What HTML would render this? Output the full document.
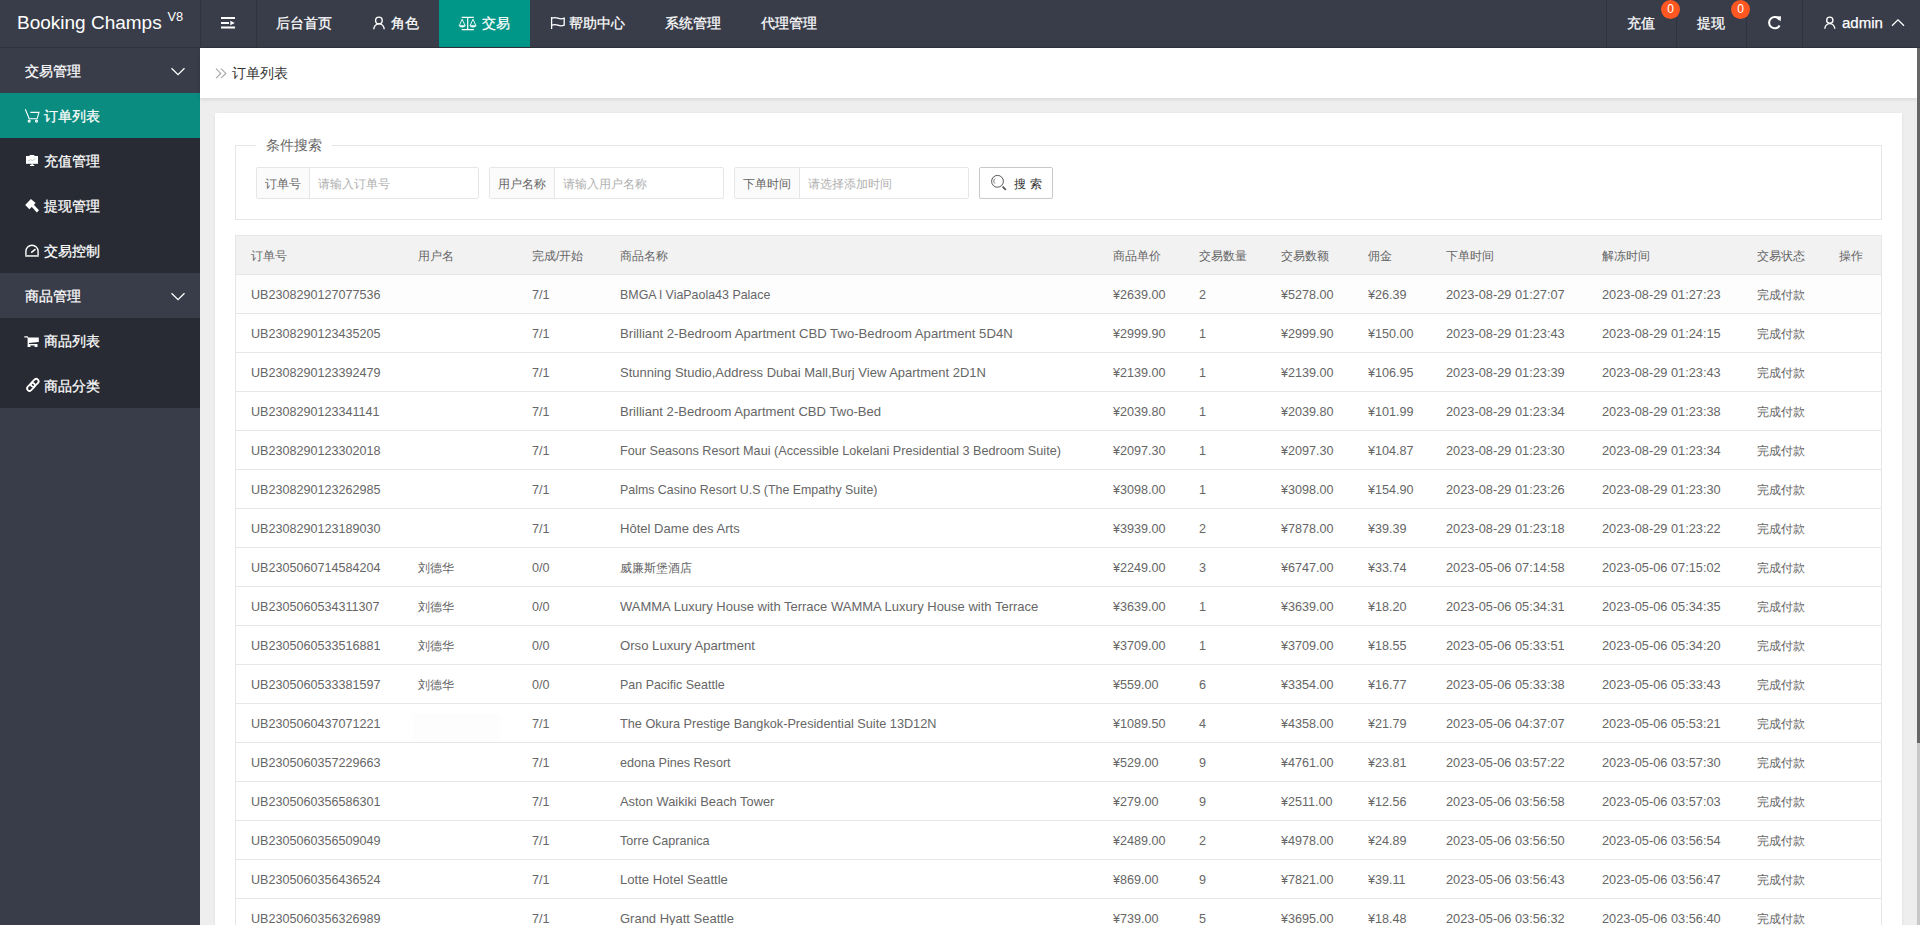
<!DOCTYPE html>
<html><head><meta charset="utf-8">
<style>
*{margin:0;padding:0;box-sizing:border-box}
html,body{width:1920px;height:925px;overflow:hidden;background:#eeeeee;font-family:"Liberation Sans",sans-serif;font-size:14px;color:#666;position:relative}
div,span{position:absolute;white-space:nowrap}
#header{left:0;top:0;width:1920px;height:48px;background:#393D49}
.vl{top:0;width:1px;height:47px;background:#30333c}
.hb{left:0;top:47px;width:1920px;height:1px;background:#30333c}
.ht{top:0;line-height:46px;color:#fff;font-size:14px;-webkit-text-stroke:0.25px #fff}
#logo{left:17px;top:0;line-height:46px;color:#fff;font-size:19px}
#v8{left:167.5px;top:11px;line-height:12px;color:#fff;font-size:12.8px}
.htact{left:439px;top:0;width:91px;height:47px;background:#009688}
.badge{width:19px;height:19px;border-radius:50%;background:#FF5722;color:#fff;font-size:12px;line-height:19px;text-align:center;top:0}
#side{left:0;top:48px;width:200px;height:877px;background:#393D49}
.mi{left:0;width:200px;height:45px}
.mi .tx{left:44px;top:0;line-height:47px;color:#fff;font-size:14px;-webkit-text-stroke:0.25px #fff}
.mi.p .tx{left:25px}
.sub{background:#282B33}
.act{background:#0a8d80}
#crumb{left:200px;top:48px;width:1717px;height:50px;background:#fff;box-shadow:0 1px 4px rgba(0,0,0,.12)}
#card{left:215px;top:113px;width:1687px;height:830px;background:#fff;box-shadow:0 1px 3px 0 rgba(0,0,0,.07)}
#fs{left:235px;top:145px;width:1647px;height:75px;border:1px solid #e6e6e6}
.leg{left:20px;top:-10px;background:#fff;padding:0 10px;font-size:14px;color:#666;line-height:18px}
.ig{top:167px;height:32px;border:1px solid #e6e6e6;border-radius:2px;background:#fff}
.ig .lb{left:0;top:0;height:30px;line-height:32px;background:#fbfbfb;border-right:1px solid #e6e6e6;font-size:12px;color:#666;text-align:center}
.ig .ph{top:0;line-height:32px;font-size:12px;color:#b0b0b0}
#btn{left:979px;top:167px;width:74px;height:32px;border:1px solid #c9c9c9;border-radius:2px;background:#fff}
.tbl{border:1px solid #e6e6e6;background:#fff}
.thd{background:#f2f2f2}
.hl{height:1px;background:#e6e6e6}
.cell{line-height:38px;height:38px;font-size:12.6px;color:#666;padding-top:1px}
.cj{font-size:12px}
.th{color:#666}
#scroll{left:1917px;top:48px;width:3px;height:877px;background:#c8c8c8}
#thumb{left:1917px;top:48px;width:3px;height:695px;background:#666}
svg{position:absolute;overflow:visible;left:0;top:0;z-index:5}

</style></head><body>
<div id="header">
  <div id="logo">Booking Champs</div><div id="v8">V8</div>
  <div class="hb"></div>
  <div class="vl" style="left:200px"></div>
  <div class="vl" style="left:256px"></div>
  <svg style="left:0;top:0" width="1" height="1"><g fill="#fff"><rect x="221" y="17" width="14" height="2"/><rect x="221" y="22" width="8" height="2"/><path d="M230.3 20.8 L234.8 23 L230.3 25.2 Z"/><rect x="221" y="26.5" width="14" height="2"/></g></svg>
  <div class="htact"></div>
  <div class="ht" style="left:276px">后台首页</div>
  <svg style="left:0;top:0" width="1" height="1"><g fill="none" stroke="#fff" stroke-width="1.4"><circle cx="378.9" cy="20.4" r="3.3"/><path d="M373.8 29.2 A5.2 5.4 0 0 1 384.2 29.2"/></g></svg>
  <div class="ht" style="left:391px">角色</div>
  <svg style="left:0;top:0" width="1" height="1"><g fill="#fff" stroke="#fff"><path d="M461.7 17.4 H473.8 M467.7 16.8 V29.5 M461.7 29.6 H473.8" stroke-width="1.2" fill="none"/><path d="M462.2 19.2 L459.3 25.6 M462.2 19.2 L465.1 25.6 M473 19.2 L470.1 25.6 M473 19.2 L475.9 25.6" stroke-width="0.9" fill="none"/><path d="M459 25.4 H465.4 Q465 27.2 462.2 27.2 Q459.4 27.2 459 25.4Z M469.8 25.4 H476.2 Q475.8 27.2 473 27.2 Q470.2 27.2 469.8 25.4Z" stroke-width="0.5"/></g></svg>
  <div class="ht" style="left:482px">交易</div>
  <svg style="left:0;top:0" width="1" height="1"><g fill="none" stroke="#fff" stroke-width="1.3"><path d="M551.6 17 V29"/><path d="M551.8 18.2 Q555 17 558 18.2 Q561 19.4 564.2 18.2 V25.2 Q561 26.4 558 25.2 Q555 24 551.8 25.2"/></g></svg>
  <div class="ht" style="left:569px">帮助中心</div>
  <div class="ht" style="left:665px">系统管理</div>
  <div class="ht" style="left:761px">代理管理</div>
  <div class="vl" style="left:1606px"></div>
  <div class="vl" style="left:1676px"></div>
  <div class="vl" style="left:1746px"></div>
  <div class="vl" style="left:1802px"></div>
  <div class="ht" style="left:1627px">充值</div>
  <div class="ht" style="left:1697px">提现</div>
  <div class="badge" style="left:1661px">0</div>
  <div class="badge" style="left:1731px">0</div>
  <svg style="left:0;top:0" width="1" height="1"><g fill="none" stroke="#fff" stroke-width="2"><path d="M1779.4 19.6 A5.6 5.6 0 1 0 1779.6 25.4"/></g><path d="M1775.8 16.6 L1781 16.2 L1780.6 21.6 Z" fill="#fff"/></svg>
  <svg style="left:0;top:0" width="1" height="1"><g fill="none" stroke="#fff" stroke-width="1.4"><circle cx="1829.8" cy="20.2" r="3.1"/><path d="M1824.8 28.8 A5 5.2 0 0 1 1834.8 28.8"/></g></svg>
  <div class="ht" style="left:1842px;font-size:15px">admin</div>
  <svg style="left:0;top:0" width="1" height="1"><path d="M1892 25.8 L1898 19.8 L1904 25.8" fill="none" stroke="#fff" stroke-width="1.3"/></svg>
</div>
<div id="side">
  <div class="mi p" style="top:0"><span class="tx">交易管理</span></div>
  <div class="mi act" style="top:45px"><span class="tx">订单列表</span></div>
  <div class="mi sub" style="top:90px"><span class="tx">充值管理</span></div>
  <div class="mi sub" style="top:135px"><span class="tx">提现管理</span></div>
  <div class="mi sub" style="top:180px"><span class="tx">交易控制</span></div>
  <div class="mi p" style="top:225px"><span class="tx">商品管理</span></div>
  <div class="mi sub" style="top:270px"><span class="tx">商品列表</span></div>
  <div class="mi sub" style="top:315px"><span class="tx">商品分类</span></div>
</div>
<svg style="left:0;top:0" width="1" height="1">
  <g fill="none" stroke="#fff" stroke-width="1.3"><path d="M171.5 68.3 L178 74.6 L184.5 68.3"/><path d="M171.5 293.3 L178 299.6 L184.5 293.3"/></g>
  <!-- cart outline -->
  <g fill="none" stroke="#fff" stroke-width="1.1"><path d="M25.3 109.3 L29.2 118.8 H37.1 L39 112.4 H30.4"/><circle cx="29.2" cy="121.1" r="1"/><circle cx="36.5" cy="121.1" r="1"/></g>
  <!-- monitor -->
  <g fill="#fff"><rect x="26" y="156" width="12" height="7.8"/><rect x="29.6" y="155" width="4.8" height="1.5"/><rect x="31.4" y="163.5" width="1.4" height="1.6"/><rect x="30" y="164.8" width="4.2" height="1.2"/></g>
  <path d="M28 161 L30.5 159.8 L32.5 160.5 L35.5 158.5" stroke="#9aa" stroke-width="0.6" fill="none"/>
  <!-- hammer -->
  <g fill="#fff"><path d="M25.2 204.9 L30.9 198.9 L35.6 203.1 L29.4 209.3 Z"/><path d="M31.2 206.2 L33.4 204.2 L39 210.2 L36.8 212.4 Z"/></g>
  <!-- gauge -->
  <g fill="none" stroke="#fff" stroke-width="1.4"><path d="M25.9 255.4 V251.4 A6.1 6.1 0 0 1 38.1 251.4 V255.4"/><path d="M31.2 252.6 L35.5 249.2" stroke-width="1.5"/></g>
  <rect x="25.2" y="255" width="13.6" height="1.9" fill="#ccc"/>
  <!-- cart filled -->
  <g fill="#fff"><path d="M24.3 336.3 H27.6 L28.3 337.4 H38.8 V342.1 L28.9 343.1 V344 H37.5 V347 H34.6 V345.6 H30.4 V347 H27.6 V338 L26.9 337.5 H24.3 Z"/></g>
  <!-- link -->
  <g fill="none" stroke="#fff" stroke-width="1.8"><rect x="26.5" y="384.5" width="9" height="4.8" rx="2.4" transform="rotate(-45 31 386.9)"/><rect x="30.2" y="380.4" width="9" height="4.8" rx="2.4" transform="rotate(-45 34.7 382.8)"/></g>
  <!-- crumb arrows -->
  <g fill="none" stroke="#aaa" stroke-width="1.2"><path d="M216 68.6 L220.8 73.4 L216 78.2"/><path d="M221 68.6 L225.8 73.4 L221 78.2"/></g>
  <!-- search icon -->
  <g fill="none" stroke="#555" stroke-width="1"><circle cx="997.5" cy="181.3" r="5.9"/><path d="M1002.6 186.6 L1005.8 189.8" stroke-width="1.8"/><path d="M995 178.6 A3.2 3.2 0 0 0 995 183.6" stroke-width="0.8"/></g>
</svg>
<div id="crumb"><span style="left:32px;top:0;line-height:50px;font-size:14px;color:#333">订单列表</span></div>
<div id="card"></div>
<div id="fs"><span class="leg">条件搜索</span></div>
<div class="ig" style="left:256px;width:223px"><span class="lb" style="width:53px">订单号</span><span class="ph" style="left:61px">请输入订单号</span></div>
<div class="ig" style="left:489px;width:235px"><span class="lb" style="width:65px">用户名称</span><span class="ph" style="left:73px">请输入用户名称</span></div>
<div class="ig" style="left:734px;width:235px"><span class="lb" style="width:65px">下单时间</span><span class="ph" style="left:73px">请选择添加时间</span></div>
<div id="btn"><span style="left:34px;top:0;line-height:32px;font-size:12px;color:#333;letter-spacing:4px">搜索</span></div>
<div id="scroll"></div><div id="thumb"></div>

<div class="tbl" style="left:235px;top:235px;width:1647px;height:703px"></div>
<div style="left:236px;top:275px;width:1645px;height:38px;background:#fdfdfd"></div><div style="left:413px;top:714px;width:87px;height:27px;background:#fdfdfd"></div>
<div class="thd" style="left:236px;top:236px;width:1645px;height:38px"></div>
<div class="cell th cj" style="left:251px;top:236px">订单号</div>
<div class="cell th cj" style="left:418px;top:236px">用户名</div>
<div class="cell th cj" style="left:532px;top:236px">完成/开始</div>
<div class="cell th cj" style="left:620px;top:236px">商品名称</div>
<div class="cell th cj" style="left:1113px;top:236px">商品单价</div>
<div class="cell th cj" style="left:1199px;top:236px">交易数量</div>
<div class="cell th cj" style="left:1281px;top:236px">交易数额</div>
<div class="cell th cj" style="left:1368px;top:236px">佣金</div>
<div class="cell th cj" style="left:1446px;top:236px">下单时间</div>
<div class="cell th cj" style="left:1602px;top:236px">解冻时间</div>
<div class="cell th cj" style="left:1757px;top:236px">交易状态</div>
<div class="cell th cj" style="left:1839px;top:236px">操作</div>
<div class="hl" style="left:236px;top:274px;width:1645px"></div>
<div class="cell" style="left:251px;top:275px">UB2308290127077536</div>
<div class="cell" style="left:532px;top:275px">7/1</div>
<div class="cell" style="left:620px;top:275px;transform:scaleX(0.9868);transform-origin:0 0">BMGA l ViaPaola43 Palace</div>
<div class="cell" style="left:1113px;top:275px">¥2639.00</div>
<div class="cell" style="left:1199px;top:275px">2</div>
<div class="cell" style="left:1281px;top:275px">¥5278.00</div>
<div class="cell" style="left:1368px;top:275px">¥26.39</div>
<div class="cell" style="left:1446px;top:275px;transform:scaleX(1.015);transform-origin:0 0">2023-08-29 01:27:07</div>
<div class="cell" style="left:1602px;top:275px;transform:scaleX(1.015);transform-origin:0 0">2023-08-29 01:27:23</div>
<div class="cell cj" style="left:1757px;top:275px">完成付款</div>
<div class="hl" style="left:236px;top:313px;width:1645px"></div>
<div class="cell" style="left:251px;top:314px">UB2308290123435205</div>
<div class="cell" style="left:532px;top:314px">7/1</div>
<div class="cell" style="left:620px;top:314px;transform:scaleX(1.0435);transform-origin:0 0">Brilliant 2-Bedroom Apartment CBD Two-Bedroom Apartment 5D4N</div>
<div class="cell" style="left:1113px;top:314px">¥2999.90</div>
<div class="cell" style="left:1199px;top:314px">1</div>
<div class="cell" style="left:1281px;top:314px">¥2999.90</div>
<div class="cell" style="left:1368px;top:314px">¥150.00</div>
<div class="cell" style="left:1446px;top:314px;transform:scaleX(1.015);transform-origin:0 0">2023-08-29 01:23:43</div>
<div class="cell" style="left:1602px;top:314px;transform:scaleX(1.015);transform-origin:0 0">2023-08-29 01:24:15</div>
<div class="cell cj" style="left:1757px;top:314px">完成付款</div>
<div class="hl" style="left:236px;top:352px;width:1645px"></div>
<div class="cell" style="left:251px;top:353px">UB2308290123392479</div>
<div class="cell" style="left:532px;top:353px">7/1</div>
<div class="cell" style="left:620px;top:353px;transform:scaleX(1.0317);transform-origin:0 0">Stunning Studio,Address Dubai Mall,Burj View Apartment 2D1N</div>
<div class="cell" style="left:1113px;top:353px">¥2139.00</div>
<div class="cell" style="left:1199px;top:353px">1</div>
<div class="cell" style="left:1281px;top:353px">¥2139.00</div>
<div class="cell" style="left:1368px;top:353px">¥106.95</div>
<div class="cell" style="left:1446px;top:353px;transform:scaleX(1.015);transform-origin:0 0">2023-08-29 01:23:39</div>
<div class="cell" style="left:1602px;top:353px;transform:scaleX(1.015);transform-origin:0 0">2023-08-29 01:23:43</div>
<div class="cell cj" style="left:1757px;top:353px">完成付款</div>
<div class="hl" style="left:236px;top:391px;width:1645px"></div>
<div class="cell" style="left:251px;top:392px">UB2308290123341141</div>
<div class="cell" style="left:532px;top:392px">7/1</div>
<div class="cell" style="left:620px;top:392px;transform:scaleX(1.0402);transform-origin:0 0">Brilliant 2-Bedroom Apartment CBD Two-Bed</div>
<div class="cell" style="left:1113px;top:392px">¥2039.80</div>
<div class="cell" style="left:1199px;top:392px">1</div>
<div class="cell" style="left:1281px;top:392px">¥2039.80</div>
<div class="cell" style="left:1368px;top:392px">¥101.99</div>
<div class="cell" style="left:1446px;top:392px;transform:scaleX(1.015);transform-origin:0 0">2023-08-29 01:23:34</div>
<div class="cell" style="left:1602px;top:392px;transform:scaleX(1.015);transform-origin:0 0">2023-08-29 01:23:38</div>
<div class="cell cj" style="left:1757px;top:392px">完成付款</div>
<div class="hl" style="left:236px;top:430px;width:1645px"></div>
<div class="cell" style="left:251px;top:431px">UB2308290123302018</div>
<div class="cell" style="left:532px;top:431px">7/1</div>
<div class="cell" style="left:620px;top:431px;transform:scaleX(1.0046);transform-origin:0 0">Four Seasons Resort Maui (Accessible Lokelani Presidential 3 Bedroom Suite)</div>
<div class="cell" style="left:1113px;top:431px">¥2097.30</div>
<div class="cell" style="left:1199px;top:431px">1</div>
<div class="cell" style="left:1281px;top:431px">¥2097.30</div>
<div class="cell" style="left:1368px;top:431px">¥104.87</div>
<div class="cell" style="left:1446px;top:431px;transform:scaleX(1.015);transform-origin:0 0">2023-08-29 01:23:30</div>
<div class="cell" style="left:1602px;top:431px;transform:scaleX(1.015);transform-origin:0 0">2023-08-29 01:23:34</div>
<div class="cell cj" style="left:1757px;top:431px">完成付款</div>
<div class="hl" style="left:236px;top:469px;width:1645px"></div>
<div class="cell" style="left:251px;top:470px">UB2308290123262985</div>
<div class="cell" style="left:532px;top:470px">7/1</div>
<div class="cell" style="left:620px;top:470px;transform:scaleX(0.9835);transform-origin:0 0">Palms Casino Resort U.S (The Empathy Suite)</div>
<div class="cell" style="left:1113px;top:470px">¥3098.00</div>
<div class="cell" style="left:1199px;top:470px">1</div>
<div class="cell" style="left:1281px;top:470px">¥3098.00</div>
<div class="cell" style="left:1368px;top:470px">¥154.90</div>
<div class="cell" style="left:1446px;top:470px;transform:scaleX(1.015);transform-origin:0 0">2023-08-29 01:23:26</div>
<div class="cell" style="left:1602px;top:470px;transform:scaleX(1.015);transform-origin:0 0">2023-08-29 01:23:30</div>
<div class="cell cj" style="left:1757px;top:470px">完成付款</div>
<div class="hl" style="left:236px;top:508px;width:1645px"></div>
<div class="cell" style="left:251px;top:509px">UB2308290123189030</div>
<div class="cell" style="left:532px;top:509px">7/1</div>
<div class="cell" style="left:620px;top:509px;transform:scaleX(1.0368);transform-origin:0 0">Hôtel Dame des Arts</div>
<div class="cell" style="left:1113px;top:509px">¥3939.00</div>
<div class="cell" style="left:1199px;top:509px">2</div>
<div class="cell" style="left:1281px;top:509px">¥7878.00</div>
<div class="cell" style="left:1368px;top:509px">¥39.39</div>
<div class="cell" style="left:1446px;top:509px;transform:scaleX(1.015);transform-origin:0 0">2023-08-29 01:23:18</div>
<div class="cell" style="left:1602px;top:509px;transform:scaleX(1.015);transform-origin:0 0">2023-08-29 01:23:22</div>
<div class="cell cj" style="left:1757px;top:509px">完成付款</div>
<div class="hl" style="left:236px;top:547px;width:1645px"></div>
<div class="cell" style="left:251px;top:548px">UB2305060714584204</div>
<div class="cell cj" style="left:418px;top:548px">刘德华</div>
<div class="cell" style="left:532px;top:548px">0/0</div>
<div class="cell cj" style="left:620px;top:548px">威廉斯堡酒店</div>
<div class="cell" style="left:1113px;top:548px">¥2249.00</div>
<div class="cell" style="left:1199px;top:548px">3</div>
<div class="cell" style="left:1281px;top:548px">¥6747.00</div>
<div class="cell" style="left:1368px;top:548px">¥33.74</div>
<div class="cell" style="left:1446px;top:548px;transform:scaleX(1.015);transform-origin:0 0">2023-05-06 07:14:58</div>
<div class="cell" style="left:1602px;top:548px;transform:scaleX(1.015);transform-origin:0 0">2023-05-06 07:15:02</div>
<div class="cell cj" style="left:1757px;top:548px">完成付款</div>
<div class="hl" style="left:236px;top:586px;width:1645px"></div>
<div class="cell" style="left:251px;top:587px">UB2305060534311307</div>
<div class="cell cj" style="left:418px;top:587px">刘德华</div>
<div class="cell" style="left:532px;top:587px">0/0</div>
<div class="cell" style="left:620px;top:587px;transform:scaleX(1.0322);transform-origin:0 0">WAMMA Luxury House with Terrace WAMMA Luxury House with Terrace</div>
<div class="cell" style="left:1113px;top:587px">¥3639.00</div>
<div class="cell" style="left:1199px;top:587px">1</div>
<div class="cell" style="left:1281px;top:587px">¥3639.00</div>
<div class="cell" style="left:1368px;top:587px">¥18.20</div>
<div class="cell" style="left:1446px;top:587px;transform:scaleX(1.015);transform-origin:0 0">2023-05-06 05:34:31</div>
<div class="cell" style="left:1602px;top:587px;transform:scaleX(1.015);transform-origin:0 0">2023-05-06 05:34:35</div>
<div class="cell cj" style="left:1757px;top:587px">完成付款</div>
<div class="hl" style="left:236px;top:625px;width:1645px"></div>
<div class="cell" style="left:251px;top:626px">UB2305060533516881</div>
<div class="cell cj" style="left:418px;top:626px">刘德华</div>
<div class="cell" style="left:532px;top:626px">0/0</div>
<div class="cell" style="left:620px;top:626px;transform:scaleX(1.0426);transform-origin:0 0">Orso Luxury Apartment</div>
<div class="cell" style="left:1113px;top:626px">¥3709.00</div>
<div class="cell" style="left:1199px;top:626px">1</div>
<div class="cell" style="left:1281px;top:626px">¥3709.00</div>
<div class="cell" style="left:1368px;top:626px">¥18.55</div>
<div class="cell" style="left:1446px;top:626px;transform:scaleX(1.015);transform-origin:0 0">2023-05-06 05:33:51</div>
<div class="cell" style="left:1602px;top:626px;transform:scaleX(1.015);transform-origin:0 0">2023-05-06 05:34:20</div>
<div class="cell cj" style="left:1757px;top:626px">完成付款</div>
<div class="hl" style="left:236px;top:664px;width:1645px"></div>
<div class="cell" style="left:251px;top:665px">UB2305060533381597</div>
<div class="cell cj" style="left:418px;top:665px">刘德华</div>
<div class="cell" style="left:532px;top:665px">0/0</div>
<div class="cell" style="left:620px;top:665px;transform:scaleX(0.9894);transform-origin:0 0">Pan Pacific Seattle</div>
<div class="cell" style="left:1113px;top:665px">¥559.00</div>
<div class="cell" style="left:1199px;top:665px">6</div>
<div class="cell" style="left:1281px;top:665px">¥3354.00</div>
<div class="cell" style="left:1368px;top:665px">¥16.77</div>
<div class="cell" style="left:1446px;top:665px;transform:scaleX(1.015);transform-origin:0 0">2023-05-06 05:33:38</div>
<div class="cell" style="left:1602px;top:665px;transform:scaleX(1.015);transform-origin:0 0">2023-05-06 05:33:43</div>
<div class="cell cj" style="left:1757px;top:665px">完成付款</div>
<div class="hl" style="left:236px;top:703px;width:1645px"></div>
<div class="cell" style="left:251px;top:704px">UB2305060437071221</div>
<div class="cell" style="left:532px;top:704px">7/1</div>
<div class="cell" style="left:620px;top:704px;transform:scaleX(1.0090);transform-origin:0 0">The Okura Prestige Bangkok-Presidential Suite 13D12N</div>
<div class="cell" style="left:1113px;top:704px">¥1089.50</div>
<div class="cell" style="left:1199px;top:704px">4</div>
<div class="cell" style="left:1281px;top:704px">¥4358.00</div>
<div class="cell" style="left:1368px;top:704px">¥21.79</div>
<div class="cell" style="left:1446px;top:704px;transform:scaleX(1.015);transform-origin:0 0">2023-05-06 04:37:07</div>
<div class="cell" style="left:1602px;top:704px;transform:scaleX(1.015);transform-origin:0 0">2023-05-06 05:53:21</div>
<div class="cell cj" style="left:1757px;top:704px">完成付款</div>
<div class="hl" style="left:236px;top:742px;width:1645px"></div>
<div class="cell" style="left:251px;top:743px">UB2305060357229663</div>
<div class="cell" style="left:532px;top:743px">7/1</div>
<div class="cell" style="left:620px;top:743px">edona Pines Resort</div>
<div class="cell" style="left:1113px;top:743px">¥529.00</div>
<div class="cell" style="left:1199px;top:743px">9</div>
<div class="cell" style="left:1281px;top:743px">¥4761.00</div>
<div class="cell" style="left:1368px;top:743px">¥23.81</div>
<div class="cell" style="left:1446px;top:743px;transform:scaleX(1.015);transform-origin:0 0">2023-05-06 03:57:22</div>
<div class="cell" style="left:1602px;top:743px;transform:scaleX(1.015);transform-origin:0 0">2023-05-06 03:57:30</div>
<div class="cell cj" style="left:1757px;top:743px">完成付款</div>
<div class="hl" style="left:236px;top:781px;width:1645px"></div>
<div class="cell" style="left:251px;top:782px">UB2305060356586301</div>
<div class="cell" style="left:532px;top:782px">7/1</div>
<div class="cell" style="left:620px;top:782px;transform:scaleX(1.0213);transform-origin:0 0">Aston Waikiki Beach Tower</div>
<div class="cell" style="left:1113px;top:782px">¥279.00</div>
<div class="cell" style="left:1199px;top:782px">9</div>
<div class="cell" style="left:1281px;top:782px">¥2511.00</div>
<div class="cell" style="left:1368px;top:782px">¥12.56</div>
<div class="cell" style="left:1446px;top:782px;transform:scaleX(1.015);transform-origin:0 0">2023-05-06 03:56:58</div>
<div class="cell" style="left:1602px;top:782px;transform:scaleX(1.015);transform-origin:0 0">2023-05-06 03:57:03</div>
<div class="cell cj" style="left:1757px;top:782px">完成付款</div>
<div class="hl" style="left:236px;top:820px;width:1645px"></div>
<div class="cell" style="left:251px;top:821px">UB2305060356509049</div>
<div class="cell" style="left:532px;top:821px">7/1</div>
<div class="cell" style="left:620px;top:821px">Torre Capranica</div>
<div class="cell" style="left:1113px;top:821px">¥2489.00</div>
<div class="cell" style="left:1199px;top:821px">2</div>
<div class="cell" style="left:1281px;top:821px">¥4978.00</div>
<div class="cell" style="left:1368px;top:821px">¥24.89</div>
<div class="cell" style="left:1446px;top:821px;transform:scaleX(1.015);transform-origin:0 0">2023-05-06 03:56:50</div>
<div class="cell" style="left:1602px;top:821px;transform:scaleX(1.015);transform-origin:0 0">2023-05-06 03:56:54</div>
<div class="cell cj" style="left:1757px;top:821px">完成付款</div>
<div class="hl" style="left:236px;top:859px;width:1645px"></div>
<div class="cell" style="left:251px;top:860px">UB2305060356436524</div>
<div class="cell" style="left:532px;top:860px">7/1</div>
<div class="cell" style="left:620px;top:860px;transform:scaleX(1.0412);transform-origin:0 0">Lotte Hotel Seattle</div>
<div class="cell" style="left:1113px;top:860px">¥869.00</div>
<div class="cell" style="left:1199px;top:860px">9</div>
<div class="cell" style="left:1281px;top:860px">¥7821.00</div>
<div class="cell" style="left:1368px;top:860px">¥39.11</div>
<div class="cell" style="left:1446px;top:860px;transform:scaleX(1.015);transform-origin:0 0">2023-05-06 03:56:43</div>
<div class="cell" style="left:1602px;top:860px;transform:scaleX(1.015);transform-origin:0 0">2023-05-06 03:56:47</div>
<div class="cell cj" style="left:1757px;top:860px">完成付款</div>
<div class="hl" style="left:236px;top:898px;width:1645px"></div>
<div class="cell" style="left:251px;top:899px">UB2305060356326989</div>
<div class="cell" style="left:532px;top:899px">7/1</div>
<div class="cell" style="left:620px;top:899px;transform:scaleX(1.0303);transform-origin:0 0">Grand Hyatt Seattle</div>
<div class="cell" style="left:1113px;top:899px">¥739.00</div>
<div class="cell" style="left:1199px;top:899px">5</div>
<div class="cell" style="left:1281px;top:899px">¥3695.00</div>
<div class="cell" style="left:1368px;top:899px">¥18.48</div>
<div class="cell" style="left:1446px;top:899px;transform:scaleX(1.015);transform-origin:0 0">2023-05-06 03:56:32</div>
<div class="cell" style="left:1602px;top:899px;transform:scaleX(1.015);transform-origin:0 0">2023-05-06 03:56:40</div>
<div class="cell cj" style="left:1757px;top:899px">完成付款</div>
</body></html>
